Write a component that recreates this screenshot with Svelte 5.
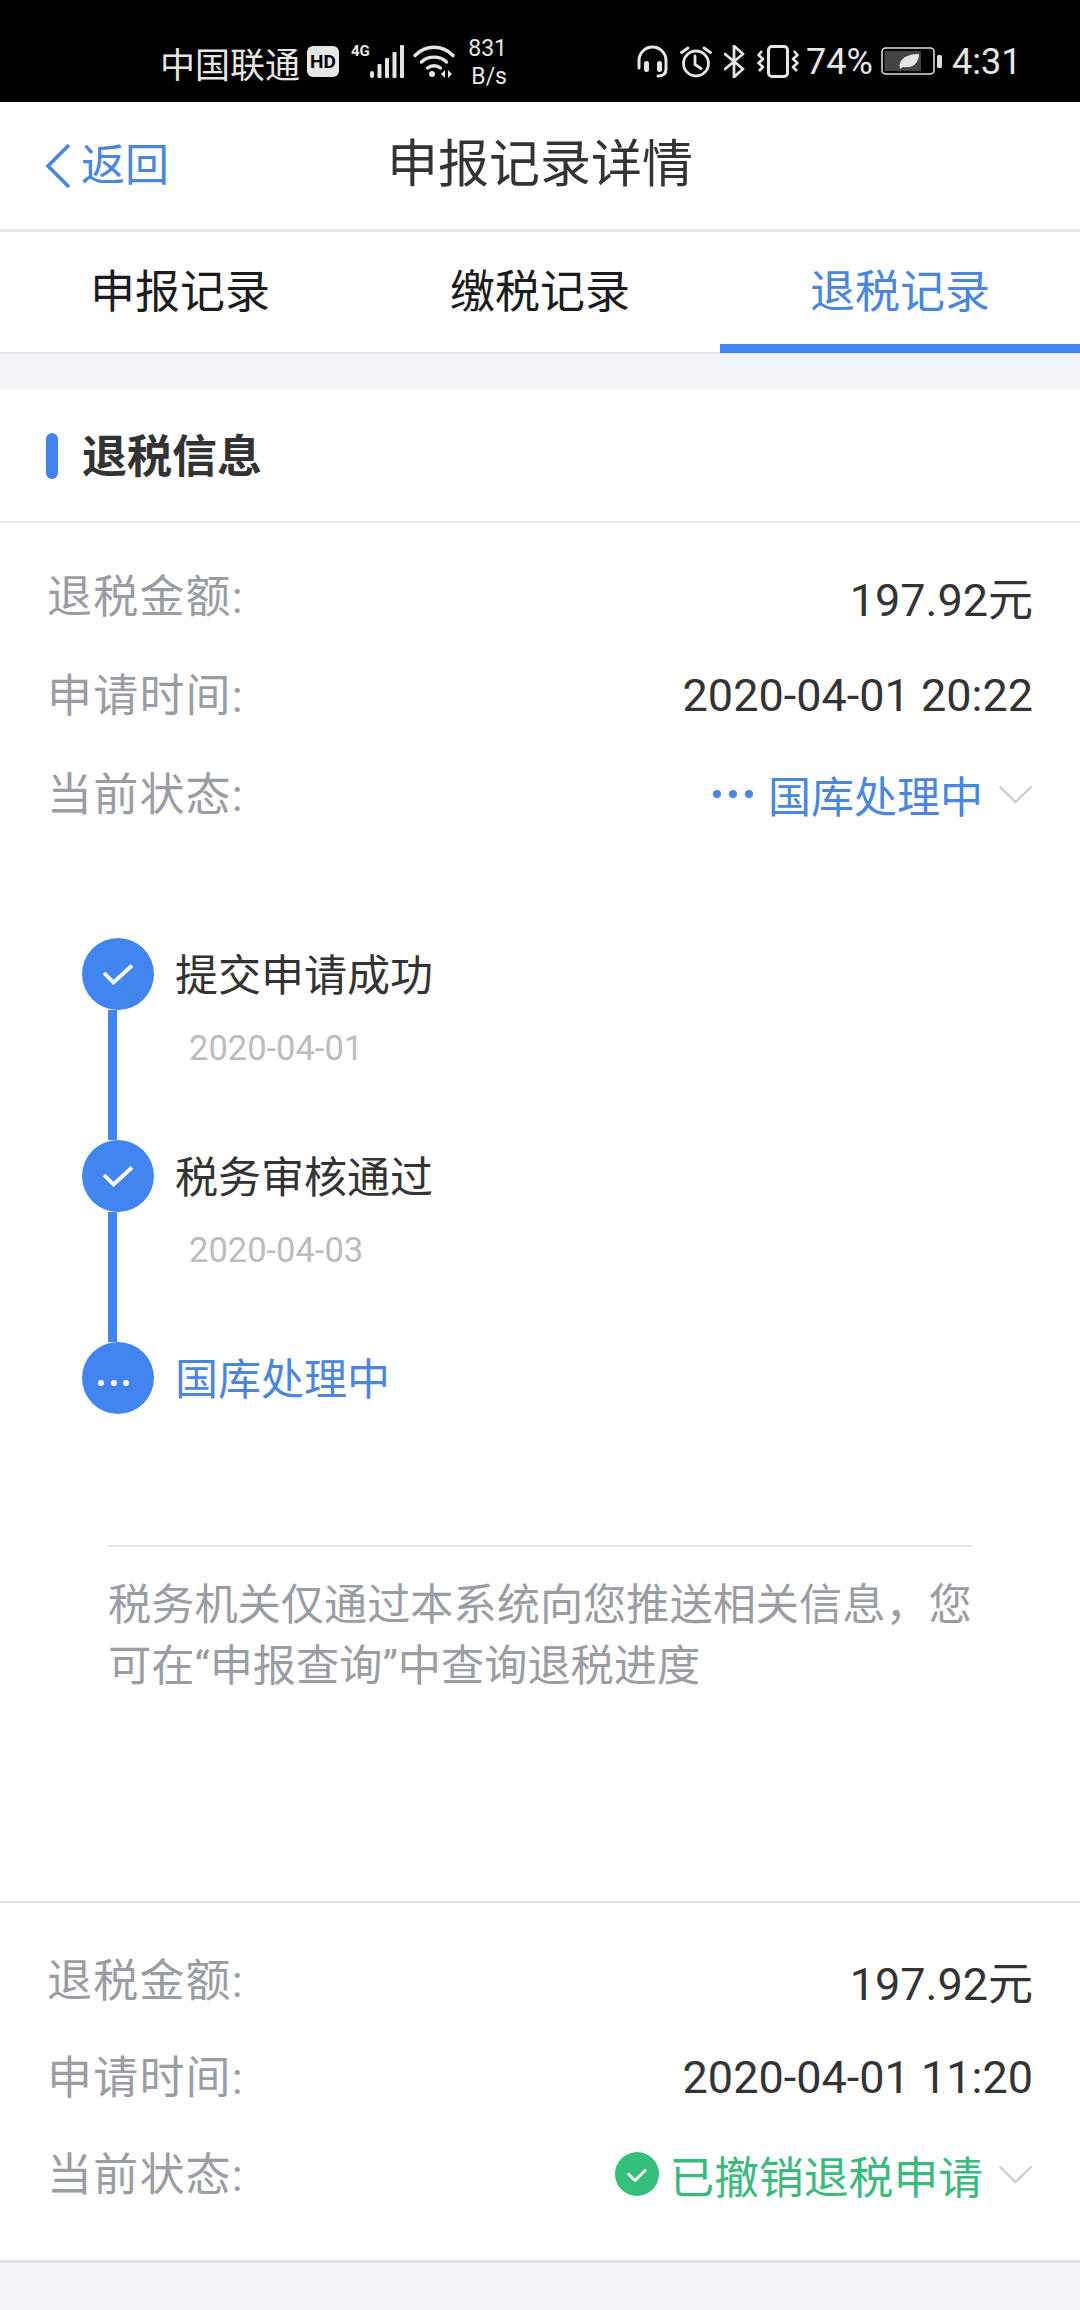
<script lang="ts">
	const tabs = ['申报记录', '缴税记录', '退税记录'];
	const steps = [
		{ name: '提交申请成功', date: '2020-04-01' },
		{ name: '税务审核通过', date: '2020-04-03' }
	];
</script>

<div class="page">
	<div class="status">
		<span class="carrier">中国联通</span>
		<span class="hd">HD</span>
		<span class="net">4G</span>
		<svg class="signal" viewBox="0 0 34 33" aria-hidden="true">
			<g fill="#e6e6e6">
				<rect x="0" y="26" width="4" height="7" rx="2" />
				<rect x="7.5" y="19" width="4" height="14" rx="1" />
				<rect x="15" y="13" width="4" height="20" rx="1" />
				<rect x="22.5" y="7" width="4" height="26" rx="1" />
				<rect x="30" y="0" width="4" height="33" rx="1" />
			</g>
		</svg>
		<svg class="wifi" viewBox="0 0 42 33" aria-hidden="true">
			<g fill="none" stroke="#e6e6e6" stroke-width="3.4" stroke-linecap="round">
				<path d="M2 10.5C12.5 -0.5 29.5 -0.5 40 10.5" />
				<path d="M8.5 17C15 10.5 27 10.5 33.5 17" />
				<path d="M14.5 23C18 20 24 20 27.5 23" />
			</g>
			<circle cx="19" cy="29" r="3" fill="#e6e6e6" />
			<path d="M28 29l4-4v8zM35 25l4 4-4 4z" fill="#e6e6e6" />
		</svg>
		<span class="speed"><span>831</span><span>B/s</span></span>
		<svg class="headset" viewBox="0 0 31 33" aria-hidden="true">
			<g fill="none" stroke="#e6e6e6" stroke-width="3" stroke-linecap="round">
				<path d="M2 23V15.500A13.500 13.500 0 0 1 29 15.500V24C29 29 26 31 21 31" />
			</g>
			<rect x="7" y="16" width="5" height="11" rx="2.500" fill="#e6e6e6" />
			<rect x="20" y="16" width="5" height="11" rx="2.500" fill="#e6e6e6" />
		</svg>
		<svg class="alarm" viewBox="0 0 32 33" aria-hidden="true">
			<g fill="none" stroke="#e6e6e6" stroke-width="2.800" stroke-linecap="round" stroke-linejoin="round">
				<circle cx="16" cy="18.500" r="12.500" />
				<path d="M15 11v8.500l6 4" />
				<path d="M1.500 7.500L8 3M30.500 7.500L24 3" />
			</g>
		</svg>
		<svg class="bt" viewBox="0 0 21 33" aria-hidden="true">
			<path d="M1 9l18 15-9 8V1l9 8L1 24" fill="none" stroke="#e6e6e6" stroke-width="2.800" stroke-linejoin="round" stroke-linecap="round" />
		</svg>
		<svg class="vib" viewBox="0 0 42 33" aria-hidden="true">
			<rect x="11.500" y="1.500" width="19" height="30" rx="3.500" fill="none" stroke="#e6e6e6" stroke-width="3" />
			<g fill="none" stroke="#e6e6e6" stroke-width="2.600" stroke-linejoin="round">
				<path d="M5 6L1.500 10 6 14 1.500 18 6 22 2 26" />
				<path d="M37 6l3.500 4L36 14l4.500 4L36 22l4 4" />
			</g>
		</svg>
		<span class="pct">74%</span>
		<svg class="battery" viewBox="0 0 61 28" aria-hidden="true">
			<rect x="1" y="1" width="52" height="26" rx="3.500" fill="none" stroke="#dcdcdc" stroke-width="1.600" />
			<rect x="3.500" y="4" width="36.500" height="20" fill="#444" />
			<path d="M19 21C17 13 25 7 38 7C38 15 33 22 22 20L19 22z" fill="#e6e6e6" />
			<rect x="56" y="8" width="5" height="13" rx="1.500" fill="#dcdcdc" />
		</svg>
		<span class="clock">4:31</span>
	</div>

	<div class="nav">
		<div class="back">
			<svg viewBox="0 0 26 46" aria-hidden="true">
				<path d="M24 2L3 23l21 21" fill="none" stroke="#4a86dc" stroke-width="3.600" />
			</svg>
			<span>返回</span>
		</div>
		<div class="title">申报记录详情</div>
	</div>

	<div class="tabs">
		{#each tabs as tab, i}
			<div class="tab" class:on={i === 2}>{tab}</div>
		{/each}
	</div>

	<div class="card">
		<div class="head">
			<span class="mark"></span>
			<span>退税信息</span>
		</div>

		<div class="rows">
			<div class="row">
				<span class="key">退税金额:</span>
				<span class="val">197.92元</span>
			</div>
			<div class="row">
				<span class="key">申请时间:</span>
				<span class="val">2020-04-01 20:22</span>
			</div>
			<div class="row">
				<span class="key">当前状态:</span>
				<span class="state blue">
					<span class="dots"><i></i><i></i><i></i></span>
					国库处理中
					<svg class="chev" viewBox="0 0 35 19" aria-hidden="true">
						<path d="M1.500 1.500L17.500 17 33.500 1.500" fill="none" stroke="#cdcdcd" stroke-width="2.400" />
					</svg>
				</span>
			</div>
		</div>

		<div class="timeline">
			{#each steps as step}
				<div class="step">
					<div class="rail">
						<span class="node">
							<svg viewBox="0 0 32 22" aria-hidden="true">
								<path d="M2 10l9.500 9.500L30 2.500" fill="none" stroke="#fff" stroke-width="3.800" />
							</svg>
						</span>
						<span class="bar"></span>
					</div>
					<div class="info">
						<div class="name">{step.name}</div>
						<div class="date">{step.date}</div>
					</div>
				</div>
			{/each}
			<div class="step last">
				<div class="rail">
					<span class="node more"><i></i><i></i><i></i></span>
				</div>
				<div class="info">
					<div class="name current">国库处理中</div>
				</div>
			</div>
		</div>

		<div class="note">税务机关仅通过本系统向您推送相关信息，您可在“申报查询”中查询退税进度</div>

		<div class="rows second">
			<div class="row">
				<span class="key">退税金额:</span>
				<span class="val">197.92元</span>
			</div>
			<div class="row">
				<span class="key">申请时间:</span>
				<span class="val">2020-04-01 11:20</span>
			</div>
			<div class="row">
				<span class="key">当前状态:</span>
				<span class="state green">
					<svg class="ok" viewBox="0 0 44 44" aria-hidden="true">
						<circle cx="22" cy="22" r="22" fill="#34c07c" />
						<path d="M13 21.500l7 7 11-11" fill="none" stroke="#fff" stroke-width="2.800" />
					</svg>
					已撤销退税申请
					<svg class="chev" viewBox="0 0 35 19" aria-hidden="true">
						<path d="M1.500 1.500L17.500 17 33.500 1.500" fill="none" stroke="#cdcdcd" stroke-width="2.400" />
					</svg>
				</span>
			</div>
		</div>
	</div>
</div>

<style>
	:global(body) {
		margin: 0;
		background: #f3f5f9;
	}
	.page {
		width: 1080px;
		height: 2310px;
		overflow: hidden;
		background: #f3f5f9;
		font-family: Roboto, "Noto Sans CJK SC", sans-serif;
		color: #333;
	}
	.status {
		display: flex;
		align-items: center;
		height: 102px;
		box-sizing: border-box;
		padding: 20px 0 0 160px;
		background: #000;
		color: #e6e6e6;
	}
	.status svg {
		flex: none;
	}
	.carrier {
		font-size: 35px;
		width: 140px;
		padding-top: 2px;
		white-space: nowrap;
	}
	.hd {
		width: 32px;
		height: 31px;
		margin-left: 7px;
		border-radius: 6px;
		background: #e6e6e6;
		color: #000;
		font-size: 19px;
		font-weight: 700;
		line-height: 31px;
		text-align: center;
	}
	.net {
		width: 19px;
		margin: -21px 0 0 12px;
		font-size: 15px;
		font-weight: 700;
		line-height: 14px;
		white-space: nowrap;
	}
	.signal {
		width: 34px;
		height: 33px;
		margin-left: 0;
	}
	.wifi {
		width: 42px;
		height: 33px;
		margin-left: 9px;
	}
	.speed {
		display: flex;
		flex-direction: column;
		align-items: flex-end;
		width: 38px;
		margin: 4px 0 0 14px;
		font-size: 23px;
		line-height: 28px;
	}
	.headset {
		width: 31px;
		height: 33px;
		margin-left: 130px;
	}
	.alarm {
		width: 32px;
		height: 33px;
		margin-left: 12px;
	}
	.bt {
		width: 21px;
		height: 33px;
		margin-left: 12px;
	}
	.vib {
		width: 42px;
		height: 33px;
		margin-left: 12px;
	}
	.pct {
		width: 64px;
		margin-left: 7px;
		padding-top: 2px;
		font-size: 36px;
		white-space: nowrap;
	}
	.battery {
		width: 61px;
		height: 28px;
		margin-left: 11px;
	}
	.clock {
		margin-left: 10px;
		padding-top: 2px;
		font-size: 36px;
	}
	.nav {
		display: grid;
		grid-template-columns: 1fr auto 1fr;
		align-items: center;
		height: 127px;
		background: #fff;
		border-bottom: 3px solid #e4e5e7;
	}
	.back {
		display: flex;
		align-items: center;
		gap: 10px;
		padding-left: 45px;
		color: #4a86dc;
		font-size: 44px;
		line-height: 46px;
	}
	.back svg {
		width: 26px;
		height: 46px;
	}
	.title {
		padding-bottom: 12px;
		font-size: 51px;
		color: #333;
	}
	.tabs {
		display: flex;
		height: 120px;
		background: #fff;
		border-bottom: 2px solid #e4e5e7;
	}
	.tab {
		flex: 1;
		box-sizing: border-box;
		height: 121px;
		padding-top: 31px;
		font-size: 45px;
		line-height: 60px;
		text-align: center;
		color: #1c1c1c;
	}
	.tab.on {
		color: #4a86dc;
		border-bottom: 9px solid #4285f0;
	}
	.card {
		margin-top: 36px;
		background: #fff;
		border-bottom: 3px solid #e2e3e8;
	}
	.head {
		display: flex;
		align-items: center;
		gap: 24px;
		height: 133px;
		box-sizing: border-box;
		padding-left: 46px;
		border-bottom: 2px solid #e8e9eb;
		font-size: 45px;
		font-weight: 700;
		color: #333;
	}
	.head span:last-child {
		padding-bottom: 5px;
	}
	.mark {
		width: 12px;
		height: 46px;
		border-radius: 6px;
		background: #4285f0;
	}
	.rows {
		padding: 21px 47px 0;
	}
	.rows.second {
		padding: 26px 47px 40px;
		border-top: 2px solid #e2e3e8;
	}
	.row {
		display: flex;
		align-items: center;
		justify-content: space-between;
		height: 99px;
		font-size: 45px;
	}
	.second .row {
		height: 97px;
	}
	.key {
		color: #9a9da3;
		letter-spacing: 1.200px;
	}
	.val {
		color: #333;
		padding-top: 5px;
		font-size: 45px;
	}
	.state {
		display: flex;
		align-items: center;
		padding-top: 5px;
	}
	.blue {
		color: #4a86dc;
		font-size: 43px;
	}
	.green {
		color: #3cb97c;
		font-size: 44.800px;
	}
	.dots {
		display: flex;
		gap: 8px;
		margin-right: 15px;
	}
	.dots i {
		width: 8px;
		height: 8px;
		border-radius: 50%;
		background: #4a86dc;
	}
	.chev {
		width: 35px;
		height: 19px;
		margin-left: 15px;
	}
	.ok {
		width: 44px;
		height: 44px;
		margin-right: 10px;
	}
	.timeline {
		padding: 97px 0 0 82px;
	}
	.step {
		display: flex;
		height: 202px;
	}
	.step.last {
		height: 70px;
	}
	.rail {
		display: flex;
		flex-direction: column;
		width: 72px;
	}
	.node {
		display: flex;
		align-items: center;
		justify-content: center;
		flex: none;
		width: 72px;
		height: 72px;
		border-radius: 50%;
		background: #4285f0;
	}
	.node svg {
		width: 32px;
		height: 22px;
	}
	.node.more {
		gap: 6.500px;
		padding: 10px 9px 0 0;
		box-sizing: border-box;
	}
	.node.more i {
		width: 6px;
		height: 6px;
		border-radius: 50%;
		background: #fff;
	}
	.bar {
		flex: 1;
		width: 9px;
		margin-left: 26px;
		background: #4285f0;
	}
	.info {
		margin-left: 21px;
	}
	.name {
		padding-top: 2px;
		font-size: 43px;
		line-height: 72px;
		color: #333;
	}
	.name.current {
		color: #4a86dc;
	}
	.date {
		padding: 16px 0 0 14px;
		font-size: 34.500px;
		line-height: 40px;
		color: #bbbcc0;
	}
	.note {
		width: 864px;
		margin: 133px 0 204px 108px;
		padding-top: 28px;
		border-top: 2px solid #e4e5e7;
		font-size: 43.200px;
		line-height: 61px;
		color: #9a9da3;
	}
</style>
